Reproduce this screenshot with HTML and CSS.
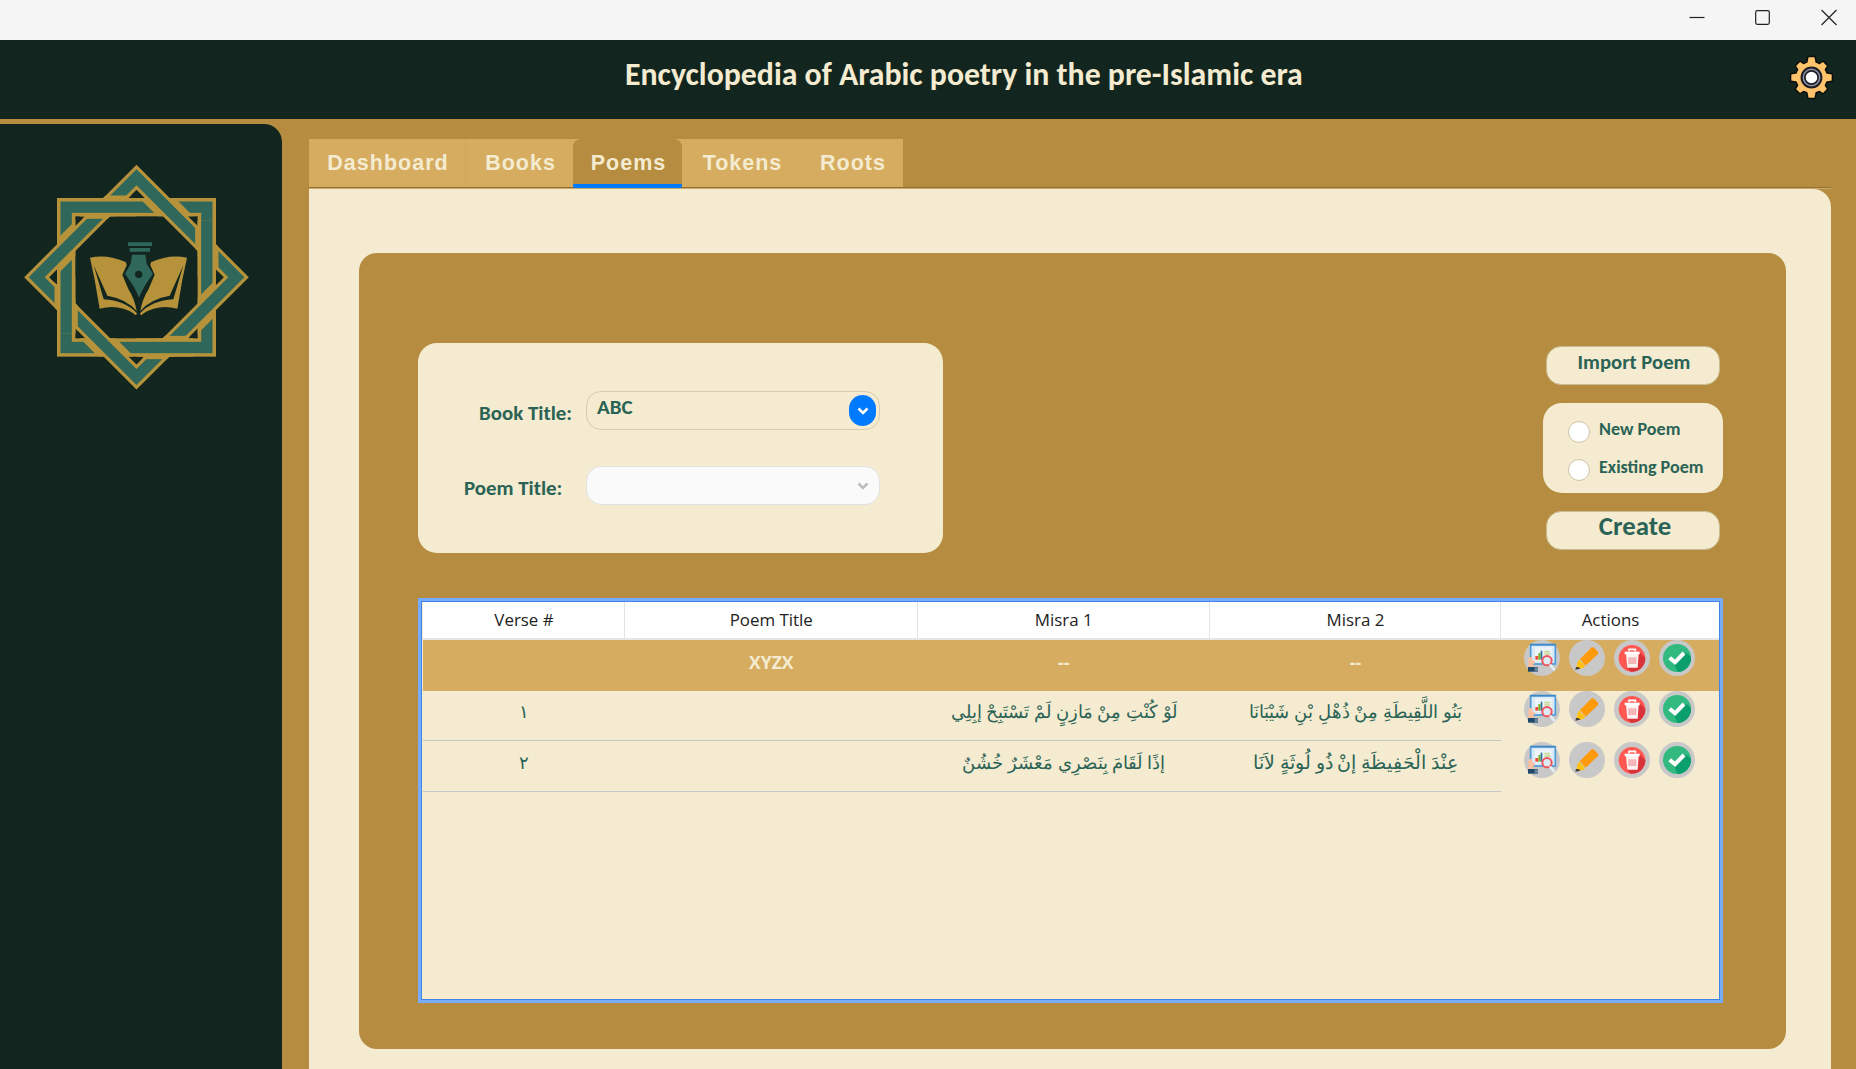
FILE: index.html
```html
<!DOCTYPE html>
<html lang="en">
<head>
<meta charset="utf-8">
<title>Encyclopedia of Arabic poetry in the pre-Islamic era</title>
<link rel="stylesheet" href="styles.css">
</head>
<body>
<svg class="defs" width="0" height="0" aria-hidden="true">
  <symbol id="i-view" viewBox="0 0 108 108">
    <rect x="20" y="14" width="74" height="58" fill="#d8e9f8" stroke="#4f9ad6" stroke-width="5"/>
    <path d="M20 14h74" stroke="#3f86c4" stroke-width="5"/>
    <path d="M33 22h50v40H33z" fill="#edf5fb"/>
    <path d="M34 48h9v11h-9z" fill="#f04a3c"/><path d="M43 39h7v20h-7z" fill="#7ab532"/><path d="M50 32h5v27h-5z" fill="#2f6f9c"/>
    <path d="M61 35h17M61 42h19" stroke="#c9d794" stroke-width="5"/>
    <path d="M13 82V57l6-7 6 3 1 9 7 1v6l-5 3v10z" fill="#fcc0a0"/>
    <path d="M12 81h30v14H12z" fill="#20496c"/><path d="M32 82h10v12H32z" fill="#6e8599"/>
    <circle cx="69" cy="62" r="14" fill="#dceaf4" stroke="#f0555e" stroke-width="6"/>
    <path d="M80 76l10 12" stroke="#e4edf3" stroke-width="8" stroke-linecap="round"/>
  </symbol>
  <symbol id="i-edit" viewBox="0 0 108 108">
    <path d="M33 57L68 22l6 0 14 15-1 5L50 77z" fill="#ff9a0a"/>
    <path d="M33 57l3 10 7 2 2 8 5 0-7 7-22 4 5-23z" fill="#ffc114"/>
    <path d="M21 81l9 1 4 4-15 3z" fill="#403d3a"/>
    <path d="M66 25l18 18" stroke="#f48a06" stroke-width="2"/>
  </symbol>
  <symbol id="i-delete" viewBox="0 0 108 108">
    <circle cx="54" cy="55" r="40" fill="#ff5751"/>
    <path d="M74 34l20 20a40 40 0 0 1-44 41L38 82z" fill="#d9343a"/>
    <path d="M36 42h38l-3 41H40z" fill="#fff1f0"/>
    <path d="M32 35h45v8H32z" fill="#fff"/><path d="M45 34v-6h19v6" fill="none" stroke="#fff" stroke-width="5"/>
    <path d="M43 52h24v20H43z" fill="#f2b2b5"/>
    <path d="M51 52v20M59 52v20" stroke="#f7c8ca" stroke-width="2"/>
  </symbol>
  <symbol id="i-check" viewBox="0 0 108 108">
    <circle cx="54" cy="54" r="42" fill="#31b980"/>
    <path d="M81 38l15 12a42 42 0 0 1-40 46L42 66z" fill="#0a9f6d"/>
    <path d="M32 53l16 14 27-28" fill="none" stroke="#fff" stroke-width="12"/>
  </symbol>
</svg>

<div class="titlebar">
  <svg viewBox="0 0 22 22"><path d="M3.500 13.500h15"/></svg>
  <svg viewBox="0 0 22 22"><rect x="3.700" y="6.700" width="13.600" height="13.600" rx="1.500"/></svg>
  <svg viewBox="0 0 22 22"><path d="M3.500 6l15 15M18.500 6l-15 15"/></svg>
</div>

<header class="header">
  <h1>Encyclopedia of Arabic poetry in the pre-Islamic era</h1>
  <svg class="gear" viewBox="-68 -68 136 136">
    <g stroke="#0a0d08" stroke-width="9" stroke-linejoin="round" fill="#0a0d08">
      <circle r="46"/>
      <path id="tooth" d="M-13-40L-9-61H9L13-40z"/>
      <use href="#tooth" transform="rotate(45) scale(.94)"/><use href="#tooth" transform="rotate(90)"/><use href="#tooth" transform="rotate(135) scale(.94)"/>
      <use href="#tooth" transform="rotate(180)"/><use href="#tooth" transform="rotate(225) scale(.94)"/><use href="#tooth" transform="rotate(270)"/><use href="#tooth" transform="rotate(315) scale(.94)"/>
    </g>
    <g fill="#ffc36b">
      <circle r="46"/>
      <path id="toothFill" d="M-13-40L-9-61H9L13-40z"/>
      <use href="#toothFill" transform="rotate(45) scale(.94)"/><use href="#toothFill" transform="rotate(90)"/><use href="#toothFill" transform="rotate(135) scale(.94)"/>
      <use href="#toothFill" transform="rotate(180)"/><use href="#toothFill" transform="rotate(225) scale(.94)"/><use href="#toothFill" transform="rotate(270)"/><use href="#toothFill" transform="rotate(315) scale(.94)"/>
    </g>
    <circle r="30" fill="#9092a6" stroke="#1c1d24" stroke-width="6"/>
    <circle r="20" fill="#fff" stroke="#1c1d24" stroke-width="5"/>
  </svg>
</header>

<div class="body">
  <aside class="sidebar">
    <svg class="logo" viewBox="69 190 681 681">
      <defs>
        <clipPath id="cSquare"><path clip-rule="evenodd" d="M171 295H648V771H171zM226 350H593V716H226z"/></clipPath>
        <clipPath id="cDiamond"><path clip-rule="evenodd" d="M409.500 195L747 532.500L409.500 870L72 532.500zM409.500 271L671 532.500L409.500 794L148 532.500z"/></clipPath>
        <clipPath id="cOver"><path d="M240 282H408V362H240zM582 363H660V532H582zM408 704H579V783H408zM159 532H237V702H159z"/></clipPath>
      </defs>
      <g fill="none" stroke-miterlimit="10">
        <rect x="198.500" y="322.500" width="422" height="421" stroke="#b6923a" stroke-width="55"/>
        <rect x="198.500" y="322.500" width="422" height="421" stroke="#2f685b" stroke-width="34"/>
        <g clip-path="url(#cSquare)"><path d="M409.500 233L709 532.500L409.500 832L110 532.500z" stroke="#b6923a" stroke-width="76"/></g>
        <path d="M409.500 233L709 532.500L409.500 832L110 532.500z" stroke="#b6923a" stroke-width="53"/>
        <path d="M409.500 233L709 532.500L409.500 832L110 532.500z" stroke="#2f685b" stroke-width="34"/>
        <g clip-path="url(#cOver)">
          <g clip-path="url(#cDiamond)"><rect x="198.500" y="322.500" width="422" height="421" stroke="#b6923a" stroke-width="70"/></g>
          <rect x="198.500" y="322.500" width="422" height="421" stroke="#b6923a" stroke-width="55"/>
          <rect x="198.500" y="322.500" width="422" height="421" stroke="#2f685b" stroke-width="34"/>
        </g>
      </g>
      <g fill="#b6923a">
        <path id="page" d="M270 474Q322 462 378 488L380 497L367 525L385 568Q404 598 410 634Q380 598 322 588L281 497L311 599Q374 602 411 641Q408 650 402 642Q356 612 299 627L284 540z"/>
        <use href="#page" transform="translate(831 0) scale(-1 1)"/>
      </g>
      <g fill="#2f685b">
        <path d="M384 428H456V439H384zM389 445H450V456H389zM396 465H436L440 492L459 523Q430 560 417 594Q404 560 375 523L392 492z"/>
        <circle cx="416" cy="524" r="11" fill="#12261f"/>
      </g>
    </svg>
  </aside>

  <main class="main">
    <nav class="tabs">
      <a class="tab t1">Dashboard</a>
      <a class="tab t2">Books</a>
      <div class="slot"><a class="tab t3 active">Poems</a></div>
      <a class="tab t4">Tokens</a>
      <a class="tab t5">Roots</a>
    </nav>
    <section class="content">
      <div class="panel">
        <div class="top">
          <form class="card">
            <div class="field"><label>Book Title:</label>
              <div class="combo"><span>ABC</span><i class="arrow"><svg viewBox="0 0 12 8"><path d="M1.500 1.500L6 6l4.500-4.500"/></svg></i></div>
            </div>
            <div class="field"><label class="wide">Poem Title:</label>
              <div class="combo disabled"><span></span><i class="arrow"><svg viewBox="0 0 12 8"><path d="M1.500 1.500L6 6l4.500-4.500"/></svg></i></div>
            </div>
          </form>
          <div class="side">
            <button class="btn">Import Poem</button>
            <div class="radios">
              <label><i></i><span>New Poem</span></label>
              <label><i></i><span>Existing Poem</span></label>
            </div>
            <button class="btn big">Create</button>
          </div>
        </div>

        <div class="table">
          <div class="row head"><span>Verse #</span><span>Poem Title</span><span>Misra 1</span><span>Misra 2</span><span>Actions</span></div>
          <div class="row title">
            <span></span><span>XYZX</span><span>--</span><span>--</span>
            <div class="actions"><b><svg><use href="#i-view"/></svg></b><b><svg><use href="#i-edit"/></svg></b><b><svg><use href="#i-delete"/></svg></b><b><svg><use href="#i-check"/></svg></b></div>
          </div>
          <div class="row verse" lang="ar">
            <span>١</span><span></span><span dir="rtl">لَوْ كُنْتِ مِنْ مَازِنٍ لَمْ تَسْتَبِحْ إبِلِي</span><span dir="rtl">بَنُو اللَّقِيطَةِ مِنْ ذُهْلِ بْنِ شَيْبَانَا</span>
            <div class="actions"><b><svg><use href="#i-view"/></svg></b><b><svg><use href="#i-edit"/></svg></b><b><svg><use href="#i-delete"/></svg></b><b><svg><use href="#i-check"/></svg></b></div>
          </div>
          <div class="row verse" lang="ar">
            <span>٢</span><span></span><span dir="rtl">إذًا لَقَامَ بِنَصْرِي مَعْشَرٌ خُشُنٌ</span><span dir="rtl" class="loose">عِنْدَ الْحَفِيظَةِ إنْ ذُو لُوثَةٍ لاَنَا</span>
            <div class="actions"><b><svg><use href="#i-view"/></svg></b><b><svg><use href="#i-edit"/></svg></b><b><svg><use href="#i-delete"/></svg></b><b><svg><use href="#i-check"/></svg></b></div>
          </div>
        </div>
      </div>
    </section>
  </main>
</div>
</body>
</html>
```
FILE: styles.css
```css
* { box-sizing: border-box; }
html, body { height: 100%; overflow: hidden; }
body {
  margin: 0;
  display: flex;
  flex-direction: column;
  background: #b68d40;
  color: #2a6355;
  font-family: Carlito, Lato, sans-serif;
}
.defs { position: absolute; }

.titlebar {
  flex: none;
  height: 40px;
  background: #f5f5f5;
  display: flex;
  justify-content: flex-end;
  gap: 44px;
  padding: 4px 16px 0 0;
}
.titlebar svg { width: 22px; height: 22px; fill: none; stroke: #222; stroke-width: 1.2; }

.header {
  flex: none;
  height: 79px;
  background: #12261f;
  display: flex;
  justify-content: space-between;
}
.header h1 {
  margin: 15px 0 0 625px;
  font-size: 31.8px;
  line-height: 40px;
  font-weight: 700;
  color: #f4ebd0;
  white-space: nowrap;
}
.gear { width: 45px; height: 45px; margin: 15px 22px 0 0; }

.body { flex: 1; min-height: 0; display: flex; }
.sidebar {
  width: 282px;
  margin-top: 5px;
  border-top-right-radius: 18px;
  background: #12261f;
  padding: 39px 0 0 23px;
}
.logo { width: 227px; height: 227px; display: block; }

.main {
  flex: 1;
  margin: 20px 25px 0 27px;
  display: flex;
  flex-direction: column;
}
.tabs { flex: none; display: flex; height: 50px; border-bottom: 1px solid #c9ab6c; box-shadow: inset 0 -1px #94712f; }
.tab {
  display: block;
  height: 48px;
  background: #d6ad60;
  color: #f4ebd0;
  font: bold 21.5px/49px "Liberation Sans", sans-serif;
  letter-spacing: 1px;
  padding-left: 2px;
  text-align: center;
}
.t1 { width: 157px; border-right: 1px solid #d1a658; }
.t2 { width: 107px; }
.t3 { width: 109px; }
.t4 { width: 119px; }
.t5 { width: 102px; }
.slot { height: 48px; background: #d6ad60; }
.tab.active {
  height: 49px;
  background:
    linear-gradient(#007aff, #007aff) bottom / 100% 4px no-repeat,
    linear-gradient(#b68d40, #b68d40);
  border-radius: 8px 8px 2px 2px;
}
.content {
  flex: 1;
  min-height: 0;
  background: #f4ebd0;
  border-top-right-radius: 18px;
  padding: 64px 45px 20px 50px;
}
.panel {
  height: 796px;
  background: #b68d40;
  border-radius: 18px;
  padding: 90px 63px 46px 59px;
}
.top { display: flex; justify-content: space-between; height: 255px; }
.card {
  width: 525px;
  height: 210px;
  background: #f4ebd0;
  border-radius: 19px;
  padding: 48px 0 0 0;
  display: flex;
  flex-direction: column;
  gap: 36px;
}
.field { display: flex; }
.field label {
  width: 107px;
  margin-left: 61px;
  font-size: 20.9px;
  font-weight: 700;
  line-height: 25px;
  padding-top: 10px;
  white-space: nowrap;
}
.field .wide { width: 122px; margin-left: 46px; }
.combo {
  width: 294px;
  height: 39px;
  border: 1.500px solid #d6cbad;
  border-radius: 15px;
  display: flex;
  justify-content: space-between;
  padding: 3px 3px 3px 10px;
}
.combo span { font-size: 21px; font-weight: 700; line-height: 24px; }
.combo.disabled { background: #fafafa; border-color: #e1e1e1; }
.arrow { width: 27px; height: 31px; border-radius: 14px; background: #007aff; display: grid; place-items: center; }
.arrow svg { width: 12px; height: 8px; fill: none; stroke: #fff; stroke-width: 2.600; }
.disabled .arrow { background: none; }
.disabled .arrow svg { stroke: #bdbdbd; }

.side { width: 180px; display: flex; flex-direction: column; align-items: center; padding-top: 3px; gap: 18px; }
.btn {
  width: 174px;
  height: 39px;
  border: 1.500px solid #c9bb94;
  border-radius: 15px;
  background: #f4ebd0;
  color: #2a6355;
  font: 700 20.7px/24px Carlito, Lato, sans-serif;
  padding: 2px 0 10px 2px;
}
.btn.big { font-size: 26.8px; padding: 0 0 9px 4px; }
.radios { width: 180px; height: 90px; background: #f4ebd0; border-radius: 19px; padding: 18px 0 0 25px; display: flex; flex-direction: column; gap: 15px; }
.radios label { display: flex; height: 22.500px; gap: 9px; }
.radios i { width: 22px; height: 22px; border-radius: 50%; background: #fff; border: 1.500px solid #cfc5a8; }
.radios span { font-size: 18.1px; font-weight: 700; line-height: 16px; white-space: nowrap; }

.table {
  height: 405px;
  background: #f4ebd0;
  border: 3px solid #77abfb;
  box-shadow: inset 0 0 0 1px #3f85e6;
  padding: 1px 1px 1px 2px;
}
.row { display: grid; grid-template-columns: 202px 292.500px 292.500px 291px 1fr; height: 51px; text-align: center; }
.head { height: 38px; background: #fff; border-bottom: 2px solid #e6e6e6; }
.head span {
  font: 16.9px/36px "Open Sans", sans-serif;
  color: #222;
  padding-left: 1px;
  border-right: 1px solid #e4e4e4;
}
.head span:last-child { border: 0; }
.title { background: #d6ad60; color: #f4ebd0; }
.title > span { font: 700 17.6px/45px "Open Sans", sans-serif; }
.verse > span {
  height: 50px;
  border-bottom: 1px solid #c8c8c8;
  font: 18.1px/40px "Open Sans", sans-serif;
}
.verse > .loose { font-size: 18.8px; }
.actions { display: flex; gap: 9px; padding-left: 23px; }
.actions b { width: 36px; height: 36px; border-radius: 50%; background: #c8c8c8; }
.actions svg { width: 36px; height: 36px; display: block; }
```
